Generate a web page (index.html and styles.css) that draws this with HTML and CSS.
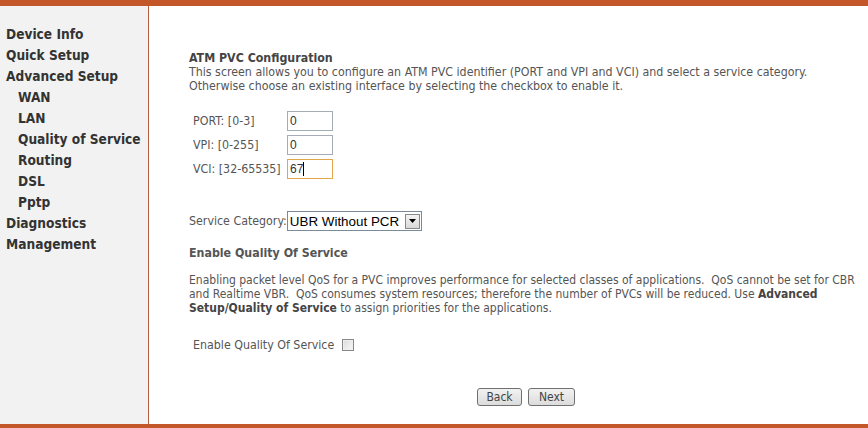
FILE: index.html
```html
<!DOCTYPE html>
<html>
<head>
<meta charset="utf-8">
<link rel="stylesheet" href="styles.css">
</head>
<body>
<div class="topbar"></div>
<div class="frame">
  <nav class="sidebar">
    <a class="nav top">Device Info</a>
    <a class="nav top">Quick Setup</a>
    <a class="nav top">Advanced Setup</a>
    <a class="nav sub">WAN</a>
    <a class="nav sub">LAN</a>
    <a class="nav sub">Quality of Service</a>
    <a class="nav sub">Routing</a>
    <a class="nav sub">DSL</a>
    <a class="nav sub">Pptp</a>
    <a class="nav top">Diagnostics</a>
    <a class="nav top">Management</a>
  </nav>
  <main class="main">
    <div class="title">ATM PVC Configuration</div>
    <div class="desc">This screen allows you to configure an ATM PVC identifier (PORT and VPI and VCI) and select a service category.<br>Otherwise choose an existing interface by selecting the checkbox to enable it.</div>
    <div class="fields">
      <div class="row"><span class="lbl">PORT: [0-3]</span><span class="inp">0</span></div>
      <div class="row"><span class="lbl">VPI: [0-255]</span><span class="inp">0</span></div>
      <div class="row"><span class="lbl">VCI: [32-65535]</span><span class="inp focus">67<i class="caret"></i></span></div>
    </div>
    <div class="svc"><span class="svclbl">Service Category:</span><span class="sel"><span class="seltext">UBR Without PCR</span><span class="arrow"><svg width="7" height="4" viewBox="0 0 7 4"><path d="M0 0H7L3.5 4Z" fill="#000"/></svg></span></span></div>
    <div class="subtitle">Enable Quality Of Service</div>
    <p class="para">Enabling packet level QoS for a PVC improves performance for selected classes of applications.&nbsp; QoS cannot be set for CBR and Realtime VBR.&nbsp; QoS consumes system resources; therefore the number of PVCs will be reduced. Use <b>Advanced Setup/Quality of Service</b> to assign priorities for the applications.</p>
    <div class="qos"><span class="qoslbl">Enable Quality Of Service</span><span class="chk"></span></div>
    <div class="buttons"><span class="btn">Back</span><span class="btn">Next</span></div>
  </main>
</div>
<div class="bottombar"></div>
</body>
</html>
```
FILE: styles.css
```css
html, body { margin: 0; padding: 0; background: #fff; }
body { width: 868px; height: 428px; overflow: hidden; font-family: "DejaVu Sans Condensed", "DejaVu Sans", sans-serif; color: #444; }
.topbar { height: 6px; background: #c4572a; }
.bottombar { height: 4px; background: #c4572a; }
.frame { display: flex; height: 418px; }
.sidebar { width: 149px; flex: none; background: #f2f2f2; border-right: 1px solid #b0603a; display: flex; flex-direction: column; padding-top: 19px; box-sizing: border-box; }
.nav { display: block; font-weight: bold; font-size: 13.6px; color: #333; height: 21px; line-height: 18px; padding-left: 6px; }
.nav.sub { padding-left: 18px; }
.main { flex: 1; padding: 45px 0 0 40px; font-size: 12.3px; }
.title { font-weight: bold; font-size: 12.3px; line-height: 14px; color: #444; }
.desc { line-height: 14px; color: #555; white-space: nowrap; }
.fields { margin-top: 18px; padding-left: 4px; display: flex; flex-direction: column; gap: 4px; }
.row { display: flex; align-items: center; height: 20px; }
.lbl { width: 94px; color: #555; }
.inp { width: 46px; height: 20px; box-sizing: border-box; border: 1px solid #a5acb5; font-family: "Liberation Sans", sans-serif; font-size: 12px; line-height: 18px; padding-left: 2px; color: #333; }
.inp.focus { border-color: #e4a64a; }
.caret { display: inline-block; width: 1px; height: 14px; background: #000; vertical-align: -3px; }
.svc { margin-top: 32px; display: flex; align-items: center; height: 20px; }
.svclbl { color: #555; }
.sel { display: flex; align-items: center; justify-content: space-between; width: 135px; height: 20px; box-sizing: border-box; border: 1px solid #7a8a99; margin-left: 0; padding: 0 1px 0 2px; background: #fff; }
.seltext { font-family: "Liberation Sans", sans-serif; font-size: 13.4px; color: #000; }
.arrow { width: 15px; height: 15px; box-sizing: border-box; border: 1px solid #888; background: linear-gradient(#f4f4f4, #d8d8d8); display: flex; align-items: center; justify-content: center; }
.subtitle { margin-top: 15px; font-weight: bold; font-size: 12.3px; color: #555; line-height: 14px; }
.para { margin: 13px 0 0 0; line-height: 14px; font-size: 12px; color: #555; padding-right: 0; }
.para b { color: #444; }
.qos { margin-top: 23px; padding-left: 4px; display: flex; align-items: center; height: 14px; }
.qoslbl { color: #555; width: 149px; }
.chk { width: 12px; height: 12px; box-sizing: border-box; border: 1px solid #888; background: linear-gradient(135deg, #dcdcdc, #f8f8f8); box-shadow: inset 0 0 0 1px #eee; }
.buttons { margin-top: 36px; display: flex; gap: 6px; padding-left: 288px; }
.btn { display: inline-flex; align-items: center; justify-content: center; height: 18px; box-sizing: border-box; border: 1px solid #707070; border-radius: 3px; background: linear-gradient(#f2f2f2, #dcdcdc); font-size: 12px; color: #444; padding: 0 7px; }
.btn:first-child { width: 45px; }
.btn:last-child { width: 47px; }
```
